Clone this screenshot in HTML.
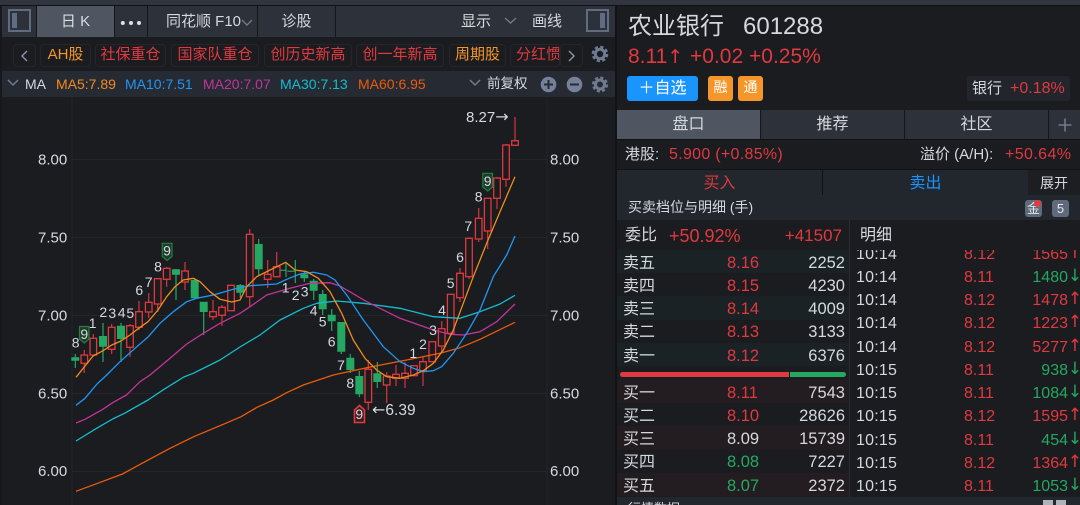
<!DOCTYPE html>
<html lang="zh"><head><meta charset="utf-8"><title>农业银行</title>
<style>
html,body{margin:0;padding:0;background:#1a1c20}
#p{position:relative;width:1080px;height:505px;overflow:hidden;background:#1a1c20;font-family:"Liberation Sans","Noto Sans CJK SC",sans-serif;color:#d5d8dd}
.b{position:absolute}
.t{position:absolute;white-space:nowrap;line-height:20px;height:20px}
.c{text-align:center}
.r{color:#e0393f}.g{color:#24a862}.o{color:#f5962a}
.ar{font-family:"DejaVu Sans",sans-serif}
.pill{position:absolute;top:44px;height:21px;border:1px solid #24262b;border-radius:4px;font-size:15px;line-height:20px;text-align:center;white-space:nowrap;overflow:hidden;box-sizing:content-box}
.bk{position:absolute;left:617px;width:232px;height:23.2px;line-height:23px;font-size:16.5px}
.bk i{position:absolute;top:1.5px;font-style:normal;white-space:nowrap}
.bk .n{left:6px;font-size:16px}.bk .pr{left:110px}.bk .q{right:4px}
.dt{position:absolute;left:850px;width:230px;height:23px;line-height:23px;font-size:16px}
.dt i{position:absolute;font-style:normal;white-space:nowrap}
.dt .tm{left:6px;letter-spacing:.2px}.dt .pr{left:114px}.dt .q{right:12px}.dt .a{right:-2px;top:-1px;font-size:17px;font-family:"DejaVu Sans",sans-serif}
</style></head><body><div id="p">
<!-- top strip -->
<div class="b" style="left:0;top:0;width:1080px;height:5px;background:#31353f"></div>
<div class="b" style="left:0;top:5px;width:1080px;height:1px;background:#111215"></div>
<!-- toolbar -->
<div class="b" style="left:0;top:6px;width:615px;height:31px;background:#2d313a"></div>
<div class="b" style="left:0;top:6px;width:2px;height:499px;background:#17181b"></div>
<div class="b" style="left:8px;top:9px;width:19px;height:19px;border:2px solid #5f6c82"></div>
<div class="b" style="left:12px;top:13px;width:5px;height:15px;background:#5f6c82"></div>
<div class="b" style="left:37px;top:6px;width:77px;height:31px;background:#4f5561"></div>
<div class="t c" style="left:37px;top:12px;width:77px;font-size:15px;color:#d9dce0">日 K</div>
<div class="b" style="left:36px;top:6px;width:1px;height:31px;background:#15161a"></div>
<div class="b" style="left:114px;top:6px;width:1px;height:31px;background:#15161a"></div>
<div class="b" style="left:147px;top:6px;width:1px;height:31px;background:#15161a"></div>
<div class="b" style="left:257px;top:6px;width:1px;height:31px;background:#15161a"></div>
<div class="b" style="left:335px;top:6px;width:1px;height:31px;background:#15161a"></div>
<svg class="b" style="left:120px;top:19px" width="24" height="8"><circle cx="2.8" cy="4" r="2" fill="#dfe1e5"/><circle cx="11" cy="4" r="2" fill="#dfe1e5"/><circle cx="19" cy="4" r="2" fill="#dfe1e5"/></svg>
<div class="t" style="left:166px;top:12px;font-size:15px">同花顺 F10</div>
<svg class="b" style="left:241px;top:18px" width="12" height="9"><path d="M1 2L6 7L11 2" fill="none" stroke="#6f7a8c" stroke-width="1.4"/></svg>
<div class="t c" style="left:258px;top:12px;width:77px;font-size:15px">诊股</div>
<div class="t" style="left:461px;top:12px;font-size:15px">显示</div>
<svg class="b" style="left:504px;top:16px" width="13" height="9"><path d="M1 2L6.5 7L12 2" fill="none" stroke="#6f7a8c" stroke-width="1.4"/></svg>
<div class="t" style="left:532px;top:12px;font-size:15px">画线</div>
<div class="b" style="left:586px;top:9px;width:19px;height:19px;border:2px solid #5f6c82"></div>
<div class="b" style="left:600px;top:13px;width:5px;height:15px;background:#5f6c82"></div>
<div class="b" style="left:615px;top:6px;width:2px;height:499px;background:#111215"></div>
<!-- pills -->
<div class="b" style="left:2px;top:37px;width:613px;height:34px;background:#1a1c20"></div>
<div class="pill" style="left:13px;width:21px;color:#8d96a6">
<svg width="21" height="21"><path d="M13 6L8 11L13 16" fill="none" stroke="#8d96a6" stroke-width="1.4"/></svg></div>
<div class="pill o" style="left:40px;width:49px">AH股</div>
<div class="pill r" style="left:95px;width:69px">社保重仓</div>
<div class="pill r" style="left:171px;width:86px">国家队重仓</div>
<div class="pill r" style="left:264px;width:86px">创历史新高</div>
<div class="pill r" style="left:356px;width:86px">创一年新高</div>
<div class="pill o" style="left:449px;width:55px">周期股</div>
<div class="pill r" style="left:510px;width:48px;text-align:left;text-indent:5px">分红惯</div>
<div class="pill" style="left:560px;width:21px;background:#1a1c20">
<svg width="21" height="21"><path d="M8 6L13 11L8 16" fill="none" stroke="#8d96a6" stroke-width="1.4"/></svg></div>
<svg class="b" style="left:591px;top:45px" width="18" height="18"><circle cx="9" cy="9" r="4.7" fill="none" stroke="#6d7a8f" stroke-width="3"/><circle cx="9" cy="9" r="7" fill="none" stroke="#6d7a8f" stroke-width="2.6" stroke-dasharray="3.2 2.3"/></svg>
<!-- MA row -->
<div class="b" style="left:2px;top:71px;width:613px;height:26px;background:#262a33"></div>
<svg class="b" style="left:7px;top:78px" width="12" height="9"><path d="M1 2L6 7L11 2" fill="none" stroke="#6f7a8c" stroke-width="1.5"/></svg>
<div class="t" style="left:25px;top:74px;font-size:14px">MA</div>
<div class="t" style="left:56px;top:74px;font-size:14px;color:#f08c1e">MA5:7.89</div>
<div class="t" style="left:125px;top:74px;font-size:14px;color:#2196f3">MA10:7.51</div>
<div class="t" style="left:203px;top:74px;font-size:14px;color:#c2349a">MA20:7.07</div>
<div class="t" style="left:280px;top:74px;font-size:14px;color:#14bdd0">MA30:7.13</div>
<div class="t" style="left:358px;top:74px;font-size:14px;color:#ec5b0c">MA60:6.95</div>
<svg class="b" style="left:469px;top:78px" width="12" height="9"><path d="M1 2L6 7L11 2" fill="none" stroke="#6f7a8c" stroke-width="1.5"/></svg>
<div class="t" style="left:487px;top:74px;font-size:13.5px">前复权</div>
<svg class="b" style="left:540px;top:76px" width="70" height="18"><circle cx="8.5" cy="8.5" r="7.8" fill="#75819a"/><path d="M4 8.5H13M8.5 4V13" stroke="#262a33" stroke-width="2"/><circle cx="34.5" cy="8.5" r="7.8" fill="#75819a"/><path d="M30 8.5H39" stroke="#262a33" stroke-width="2"/><circle cx="60" cy="8.5" r="4.5" fill="none" stroke="#6d7a8f" stroke-width="3"/><circle cx="60" cy="8.5" r="6.8" fill="none" stroke="#6d7a8f" stroke-width="2.5" stroke-dasharray="3.1 2.25"/></svg>
<!-- chart -->
<svg class="b" style="left:0;top:0" width="615" height="505" font-family="Liberation Sans,sans-serif">
<g stroke="#232529" stroke-width="1" fill="none">
<path d="M72 97V505M547 97V505"/>
<path d="M72 159.5H547M72 237.5H547M72 315.5H547M72 393.5H547M72 471.5H547"/>
</g>
<!-- green wicks + bodies -->
<g fill="none" stroke="#24a862">
<path stroke-width="1.2" d="M75.3 354V368M103 323V362M121 323V362M176 269V300M194.7 278V299M203.7 302V335M240.3 284V298M258.7 239V275M286 263V277M295.3 260V283M304.3 271V282M313.7 279V300M322.7 290V315M331.7 309V331M341.3 322V354M350.3 354V373M359.3 371V397M377.3 362V388"/>
<path stroke-width="8" d="M75.3 357.3V360.7M103 336V346.7M121 325.7V339M176 269.3V274.7M194.7 280V298.3M203.7 301.7V312M240.3 285V292.7M258.7 244V269.3M304.3 274.3V278.3M313.7 280.7V290.7M322.7 294V309.3M331.7 314.7V321.3M341.3 322V351.7M350.3 357.7V370M359.3 376V394.3M377.3 373.3V382"/>
<path stroke-width="8" d="M282 269.7V270.9M291.3 270.6V271.8"/>
</g>
<!-- red wicks -->
<path fill="none" stroke="#d8353d" stroke-width="1.2" d="M84.3 350V373M93.3 334V356M111.7 324V354M130 324V357M139 301V330M148.7 293V318M157.7 278V312M166.7 267V287M185 262V290M213 300V320M222 305V326M231 285V311M249.7 229V307M267.7 260V288M276.7 252V277M368.3 360V410M386.7 372V403M396 365V386M405 362V388M414 365V376M423 356V386M432.3 341V362M441.7 321V353M450.7 294V334M460 268V302M469 238V279M478.7 208V242M487.7 198V249M497 177V209M506 144V187M515 117V145"/>
<!-- red bodies -->
<g fill="#1a1c20" stroke="#e0393f" stroke-width="1.3">
<rect x="81" y="355" width="6.6" height="8.3"/><rect x="90" y="338.3" width="6.6" height="16.7"/><rect x="108.4" y="327.3" width="6.6" height="22"/><rect x="126.7" y="325.7" width="6.6" height="21.6"/><rect x="135.7" y="311.7" width="6.6" height="15.6"/><rect x="145.4" y="302.3" width="6.6" height="9.7"/><rect x="154.4" y="278.7" width="6.6" height="25.3"/><rect x="163.4" y="268.3" width="6.6" height="11"/><rect x="181.7" y="271" width="6.6" height="11"/><rect x="209.7" y="311.7" width="6.6" height="5"/><rect x="218.7" y="307.3" width="6.6" height="8"/><rect x="227.7" y="285.3" width="6.6" height="25.4"/><rect x="246.4" y="234.3" width="6.6" height="62.4"/><rect x="264.4" y="274.3" width="6.6" height="5"/><rect x="273.4" y="266.7" width="6.6" height="10"/><rect x="365" y="369.3" width="6.6" height="33"/><rect x="383.4" y="376" width="6.6" height="9"/><rect x="392.7" y="374.3" width="6.6" height="4"/><rect x="401.7" y="373.3" width="6.6" height="5"/><rect x="410.7" y="365.7" width="6.6" height="10"/><rect x="419.7" y="361.7" width="6.6" height="9"/><rect x="429" y="341.7" width="6.6" height="20"/><rect x="438.4" y="328.7" width="6.6" height="17.3"/><rect x="447.4" y="294.3" width="6.6" height="39"/><rect x="456.7" y="273.3" width="6.6" height="24.4"/><rect x="465.7" y="238.3" width="6.6" height="38.4"/><rect x="475.4" y="218.3" width="6.6" height="20.7"/><rect x="484.4" y="198.3" width="6.6" height="32.7"/><rect x="493.7" y="178" width="6.6" height="20.3"/><rect x="502.7" y="145" width="6.6" height="34.3"/><rect x="511.7" y="140.7" width="6.6" height="4.6"/>
</g>
<!-- MA lines -->
<g fill="none" stroke-width="1.3" stroke-linejoin="round">
<path stroke="#ec5b0c" d="M76 491.3L94.9 484.3L122.5 474L142 463.3L170 448.3L193.7 436.7L223.3 424.3L241 416.7L257 407.3L273.3 400L286.6 392.7L303.3 385L333.3 375L366.7 367.7L406.7 360L440 353.3L460 347.7L480 339.3L515 322.3"/>
<path stroke="#14bdd0" d="M76 441L94.9 429.3L112.6 419L124.5 413.3L148 400L164 389.3L183.8 377L193.3 373.3L220 360L240 347L260 335L280 320L303.3 308.3L316.7 303.3L336.7 301L363.3 303.3L400 308.3L433.3 316.7L460 318.3L480 311.7L500 304L515 295.3"/>
<path stroke="#c2349a" d="M76 423L85 419.3L102.8 409.3L112.6 402.7L126.5 395L140 381.7L150 375L170 358.3L186.7 344L203.3 333.3L220 323.3L240 313.3L250 306.7L266.7 295L290 288.3L310 283.3L330 282.7L340 286L366.7 301.7L400 318.3L433.3 330L450 334.3L463.3 335L480 331.7L496.7 321.7L515 304"/>
<path stroke="#2196f3" d="M76 405.3L85 398.3L97 384L106.7 375L120 361.7L135 348.3L148.3 336.7L160 323.3L173.3 311.7L186.7 301.7L196.7 298.3L213.3 295L233.3 289.3L250 285.7L276.7 284L286.7 279.3L300 274L313.3 272.3L326.7 275L335 280L346.7 295L363.3 320L383.3 346.7L400 361.7L413.3 368.3L423.3 371.7L433.3 370.7L441.7 366.7L453.3 353.3L466.7 333.3L480 310L493.3 276.7L506.7 255L515 236"/>
<path stroke="#f08c1e" d="M76 377.3L93 356L103 350.7L111.7 345L121 341L130 335L140 327.3L148 321.7L158 310L166.7 296.7L175 286.7L183 280L193.3 278.3L200 281.7L210 291.7L220 299.3L231.7 302L240 300L246.7 286.7L256.7 276.7L270 270L285.7 262.3L295 270L306.7 271.7L318.3 278.3L330 291.7L341.7 313.3L353.3 340L365 358.3L376.7 370L386.7 376.7L400 378.3L413.3 375L423.3 370.7L433.3 363.3L443.3 350L453.3 330L463.3 303.3L473.3 276.7L486.7 243.3L500 211.7L515 176.7"/>
</g>
<!-- badges -->
<g fill="#1f3a2b" stroke="#24803f" stroke-width="1.2">
<path d="M79.5 326.5H89V339L84.3 343L79.5 339Z"/>
<path d="M162.3 243.3H172V256.5L167 260.5L162.3 256.5Z"/>
<path d="M482.8 173.3H492.5V187L487.7 191L482.8 187Z"/>
</g>
<path d="M354.5 422.5V410L359.5 405.5L364.5 410V422.5Z" fill="#3a1c22" stroke="#e0393f" stroke-width="1.6"/>
<!-- numbers -->
<g font-size="14" fill="#d5d8dd" text-anchor="middle">
<text x="75.7" y="347.5">8</text><text x="84.3" y="339">9</text><text x="92.7" y="328">1</text><text x="103.3" y="317">2</text><text x="112.3" y="318">3</text><text x="121.7" y="317.5">4</text><text x="130.3" y="318">5</text><text x="139.3" y="295">6</text><text x="148.7" y="287">7</text><text x="158" y="271.5">8</text><text x="167" y="255.5">9</text>
<text x="285.7" y="292.5">1</text><text x="295.7" y="300">2</text><text x="304.7" y="296.5">3</text><text x="313.7" y="315.5">4</text><text x="322.7" y="326.5">5</text><text x="331.7" y="346.5">6</text><text x="341" y="370">7</text><text x="350.3" y="388">8</text><text x="359.3" y="419">9</text>
<text x="413.3" y="358">1</text><text x="423" y="349">2</text><text x="433" y="335">3</text><text x="442" y="315">4</text><text x="450.7" y="288">5</text><text x="460" y="262">6</text><text x="468.3" y="231">7</text><text x="478.7" y="201.5">8</text><text x="487.7" y="186">9</text>
</g>
<text x="372" y="415" font-size="15.5" fill="#d5d8dd"><tspan font-family="DejaVu Sans,sans-serif" font-size="16">←</tspan>6.39</text>
<text x="466" y="122" font-size="15" fill="#d5d8dd">8.27<tspan font-family="DejaVu Sans,sans-serif" font-size="16">→</tspan></text>
<g font-size="15" fill="#d5d8dd">
<text x="38" y="164.5">8.00</text><text x="38" y="242.5">7.50</text><text x="38" y="320.5">7.00</text><text x="38" y="398.5">6.50</text><text x="38" y="476">6.00</text>
<text x="550" y="164.5">8.00</text><text x="550" y="242.5">7.50</text><text x="550" y="320.5">7.00</text><text x="550" y="398.5">6.50</text><text x="550" y="476">6.00</text>
</g>
</svg>
<!-- right header -->
<div class="t" style="left:628px;top:15px;font-size:24px;line-height:24px;height:24px;color:#d5d8dd">农业银行</div>
<div class="t" style="left:743px;top:14px;font-size:24px;line-height:26px;height:26px;color:#d5d8dd">601288</div>
<div class="t r" style="left:628px;top:45px;font-size:21px;line-height:24px;height:24px">8.11<span class="ar" style="font-size:19px">↑</span></div>
<div class="t r" style="left:690px;top:45px;font-size:21px;line-height:24px;height:24px">+0.02</div>
<div class="t r" style="left:749px;top:45px;font-size:21px;line-height:24px;height:24px">+0.25%</div>
<div class="b" style="left:627px;top:76px;width:71px;height:25px;background:#1a94ff;border-radius:3px"></div>
<div class="t c" style="left:627px;top:79px;width:71px;font-size:16px;color:#fff">＋自选</div>
<div class="b" style="left:708px;top:76px;width:25px;height:25px;background:#f5962a;border-radius:3px"></div>
<div class="t c" style="left:708px;top:77px;width:25px;font-size:14px;color:#fff">融</div>
<div class="b" style="left:738px;top:76px;width:25px;height:25px;background:#f5962a;border-radius:3px"></div>
<div class="t c" style="left:738px;top:77px;width:25px;font-size:14px;color:#fff">通</div>
<div class="b" style="left:967px;top:76px;width:103px;height:25px;background:#22252b;border-radius:3px"></div>
<div class="t" style="left:972px;top:79px;font-size:15px">银行</div>
<div class="t r" style="left:1010px;top:79px;font-size:16px">+0.18%</div>
<!-- tabs -->
<div class="b" style="left:617px;top:110px;width:463px;height:29px;background:#2d313a"></div>
<div class="b" style="left:617px;top:110px;width:143px;height:29px;background:#4f5561"></div>
<div class="b" style="left:760px;top:110px;width:1px;height:29px;background:#15161a"></div>
<div class="b" style="left:904px;top:110px;width:1px;height:29px;background:#15161a"></div>
<div class="b" style="left:1048px;top:110px;width:1px;height:29px;background:#15161a"></div>
<div class="b" style="left:617px;top:139px;width:463px;height:1px;background:#111215"></div>
<div class="t c" style="left:617px;top:115px;width:143px;font-size:16px">盘口</div>
<div class="t c" style="left:761px;top:115px;width:143px;font-size:16px">推荐</div>
<div class="t c" style="left:905px;top:115px;width:143px;font-size:16px">社区</div>
<svg class="b" style="left:1058px;top:118px" width="14" height="14"><path d="M0.5 7H13.5M7 0.5V13.5" stroke="#6f7a8c" stroke-width="1.6"/></svg>
<!-- hk row -->
<div class="t" style="left:625px;top:145px;font-size:15px">港股:</div>
<div class="t r" style="left:669px;top:145px;font-size:16px;letter-spacing:.3px">5.900 (+0.85%)</div>
<div class="t" style="left:920px;top:145px;font-size:15px">溢价 (A/H):</div>
<div class="t r" style="left:1005px;top:145px;font-size:16px;letter-spacing:.4px">+50.64%</div>
<!-- buy sell -->
<div class="b" style="left:617px;top:170px;width:463px;height:25px;background:#22262d"></div>
<div class="b" style="left:617px;top:169px;width:463px;height:1px;background:#111215"></div>
<div class="b" style="left:822px;top:170px;width:1px;height:25px;background:#111215"></div>
<div class="b" style="left:1028px;top:170px;width:52px;height:25px;background:#1c1e22"></div>
<div class="t c r" style="left:617px;top:174px;width:205px;font-size:16px">买入</div>
<div class="t c" style="left:823px;top:174px;width:205px;font-size:16px;color:#1a94ff">卖出</div>
<div class="t c" style="left:1028px;top:173px;width:52px;font-size:14px">展开</div>
<div class="b" style="left:617px;top:195px;width:463px;height:25px;background:#22262d"></div>
<div class="t" style="left:628px;top:197px;font-size:14px">买卖档位与明细 (手)</div>
<div class="b" style="left:1025px;top:200px;width:17px;height:17px;background:#5f6a7c;border-radius:3px"></div>
<div class="t c" style="left:1025px;top:199px;width:17px;font-size:13px;color:#e3e5e8">金</div>
<div class="b" style="left:1034px;top:200px;width:7px;height:7px;background:#e0393f;border-radius:50%"></div>
<div class="b" style="left:1052px;top:200px;width:17px;height:17px;background:#5f6a7c;border-radius:3px"></div>
<div class="t c" style="left:1052px;top:199px;width:17px;font-size:13px;color:#e3e5e8">5</div>
<!-- weibi -->
<div class="t" style="left:625px;top:226px;font-size:16px">委比</div>
<div class="t r" style="left:669px;top:226px;font-size:18px">+50.92%</div>
<div class="t r" style="left:742px;top:226px;width:100px;text-align:right;font-size:17px">+41507</div>
<div class="t" style="left:860px;top:226px;font-size:16px">明细</div>
<div class="b" style="left:849px;top:220px;width:1px;height:277px;background:#282b31"></div>
<!-- book -->
<div class="bk" style="top:250px;background:#1b2226;width:232px"><i class="n">卖五</i><i class="pr r">8.16</i><i class="q">2252</i></div>
<div class="bk" style="top:273.2px"><i class="n">卖四</i><i class="pr r">8.15</i><i class="q">4230</i></div>
<div class="bk" style="top:296.4px;background:#1b2226"><i class="n">卖三</i><i class="pr r">8.14</i><i class="q">4009</i></div>
<div class="bk" style="top:319.6px"><i class="n">卖二</i><i class="pr r">8.13</i><i class="q">3133</i></div>
<div class="bk" style="top:343px;background:#1b2226"><i class="n">卖一</i><i class="pr r">8.12</i><i class="q">6376</i></div>
<div class="b" style="left:620px;top:372px;width:169px;height:5px;background:#e0393f;border-radius:3px 0 0 3px"></div>
<div class="b" style="left:790px;top:372px;width:56px;height:5px;background:#24a862;border-radius:0 3px 3px 0"></div>
<div class="bk" style="top:380px;background:#231c20"><i class="n">买一</i><i class="pr r">8.11</i><i class="q">7543</i></div>
<div class="bk" style="top:403.2px"><i class="n">买二</i><i class="pr r">8.10</i><i class="q">28626</i></div>
<div class="bk" style="top:426.4px;background:#231c20"><i class="n">买三</i><i class="pr">8.09</i><i class="q">15739</i></div>
<div class="bk" style="top:449.6px"><i class="n">买四</i><i class="pr g">8.08</i><i class="q">7227</i></div>
<div class="bk" style="top:473px;background:#231c20"><i class="n">买五</i><i class="pr g">8.07</i><i class="q">2372</i></div>
<!-- detail -->
<div class="b" style="left:850px;top:250px;width:230px;height:247px;overflow:hidden">
<div class="b" style="left:0;top:1px;width:230px;height:247px">
<div class="dt" style="left:0;top:-8px"><i class="tm">10:14</i><i class="pr r">8.12</i><i class="q r">1565</i><i class="a r">↑</i></div>
<div class="dt" style="left:0;top:15px"><i class="tm">10:14</i><i class="pr r">8.11</i><i class="q g">1480</i><i class="a g">↓</i></div>
<div class="dt" style="left:0;top:38px"><i class="tm">10:14</i><i class="pr r">8.12</i><i class="q r">1478</i><i class="a r">↑</i></div>
<div class="dt" style="left:0;top:61px"><i class="tm">10:14</i><i class="pr r">8.12</i><i class="q r">1223</i><i class="a r">↑</i></div>
<div class="dt" style="left:0;top:85px"><i class="tm">10:14</i><i class="pr r">8.12</i><i class="q r">5277</i><i class="a r">↑</i></div>
<div class="dt" style="left:0;top:108px"><i class="tm">10:15</i><i class="pr r">8.11</i><i class="q g">938</i><i class="a g">↓</i></div>
<div class="dt" style="left:0;top:131px"><i class="tm">10:15</i><i class="pr r">8.11</i><i class="q g">1084</i><i class="a g">↓</i></div>
<div class="dt" style="left:0;top:154px"><i class="tm">10:15</i><i class="pr r">8.12</i><i class="q r">1595</i><i class="a r">↑</i></div>
<div class="dt" style="left:0;top:178px"><i class="tm">10:15</i><i class="pr r">8.11</i><i class="q g">454</i><i class="a g">↓</i></div>
<div class="dt" style="left:0;top:201px"><i class="tm">10:15</i><i class="pr r">8.12</i><i class="q r">1364</i><i class="a r">↑</i></div>
<div class="dt" style="left:0;top:224px"><i class="tm">10:15</i><i class="pr r">8.11</i><i class="q g">1053</i><i class="a g">↓</i></div>
</div>
</div>
<div class="b" style="left:617px;top:497px;width:463px;height:8px;background:#22262d;overflow:hidden">
<div class="t" style="left:11px;top:2px;font-size:13px">行情数据</div>
<div class="b" style="left:426px;top:3px;width:10px;height:5px;background:#aeb2b9"></div>
<div class="b" style="left:439px;top:3px;width:10px;height:5px;background:#aeb2b9"></div>
</div>
</div></body></html>
